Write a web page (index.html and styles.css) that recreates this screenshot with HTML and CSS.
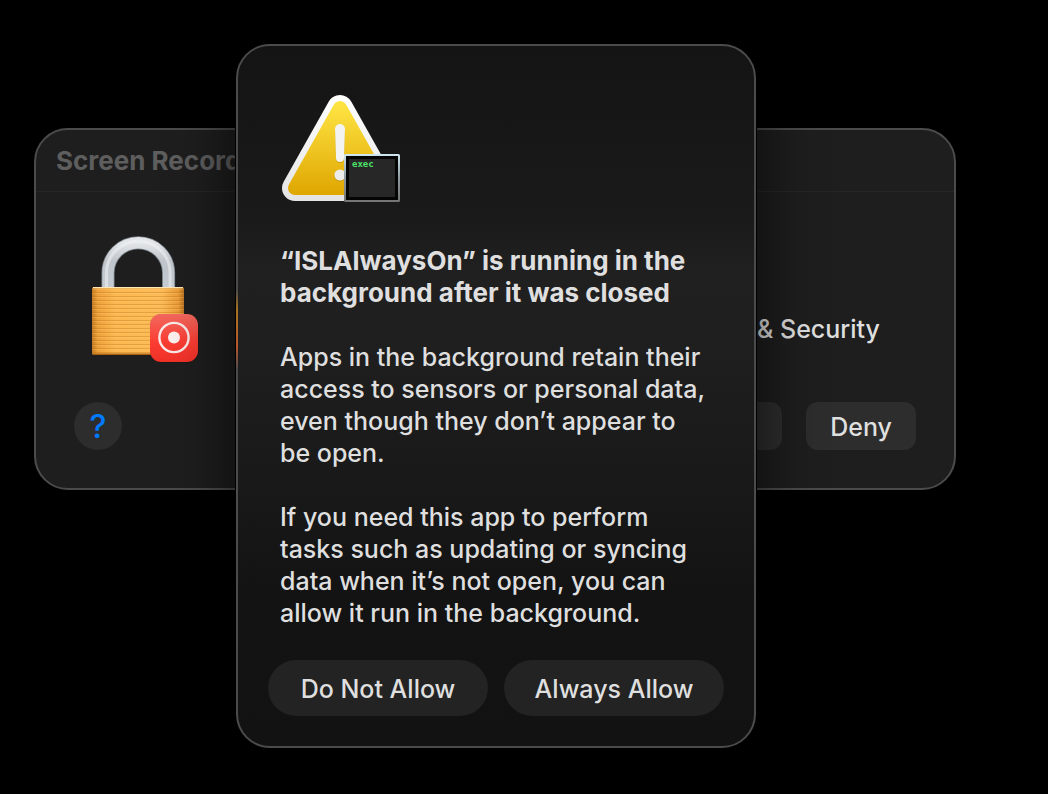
FILE: index.html
```html
<!DOCTYPE html>
<html lang="en">
<head>
    <meta charset="UTF-8">
    <meta name="viewport" content="width=device-width, initial-scale=1.0">
    <title>ISLAlwaysOn</title>
    <link rel="stylesheet" href="styles.css">
</head>
<body>
    <main class="desktop">
        <section class="window" aria-label="Screen Recording">
            <header class="titlebar">
                <h2>Screen Recording</h2>
            </header>
            <div class="window-body">
                <svg class="lock" width="128" height="144" viewBox="0 0 128 144" aria-hidden="true">
                    <defs>
                        <linearGradient id="steel" x1="0" y1="0" x2="0" y2="1">
                            <stop offset="0" stop-color="#e3e6e9"/>
                            <stop offset="0.4" stop-color="#c0c5cb"/>
                            <stop offset="1" stop-color="#c5ccd3"/>
                        </linearGradient>
                        <linearGradient id="brass" x1="0" y1="0" x2="1" y2="0">
                            <stop offset="0" stop-color="#c47a20"/>
                            <stop offset="0.06" stop-color="#eda03a"/>
                            <stop offset="0.25" stop-color="#fcb850"/>
                            <stop offset="0.75" stop-color="#fdbc58"/>
                            <stop offset="0.94" stop-color="#eb9c36"/>
                            <stop offset="1" stop-color="#b8701d"/>
                        </linearGradient>
                        <linearGradient id="record" x1="0" y1="0" x2="0" y2="1">
                            <stop offset="0" stop-color="#f2695f"/>
                            <stop offset="0.6" stop-color="#fb3c32"/>
                            <stop offset="1" stop-color="#ef3127"/>
                        </linearGradient>
                        <pattern id="ridges" width="8" height="4" patternUnits="userSpaceOnUse">
                            <rect y="3" width="8" height="1" fill="#ba6c10" opacity="0.35"/>
                            <rect y="0" width="8" height="1" fill="#ffd792" opacity="0.2"/>
                        </pattern>
                    </defs>
                    <path d="M28 64V48a30.3 30.3 0 0 1 60.6 0V64" fill="none" stroke="#7e868f" stroke-width="13"/>
                    <path d="M28 64V48a30.3 30.3 0 0 1 60.6 0V64" fill="none" stroke="url(#steel)" stroke-width="11.4"/>
                    <path d="M26.5 62V48a31.8 31.8 0 0 1 63.6 0V62" fill="none" stroke="#f0f2f4" stroke-width="3" opacity="0.55"/>
                    <rect x="12" y="62" width="92" height="68" rx="2" fill="url(#brass)"/>
                    <rect x="12" y="62" width="92" height="68" rx="2" fill="url(#ridges)"/>
                    <rect x="13" y="62" width="90" height="1.3" fill="#ffe6b4"/>
                    <rect x="13" y="128.5" width="90" height="1.5" fill="#a96111"/>
                    <rect x="70" y="89" width="48.5" height="48.5" rx="11.5" fill="#000" opacity="0.25"/>
                    <rect x="70" y="89" width="48" height="48" rx="11" fill="url(#record)"/>
                    <circle cx="94" cy="112.5" r="14.6" fill="none" stroke="#fbe9e8" stroke-width="2.4"/>
                    <circle cx="94" cy="112.5" r="6" fill="#fdf0ef"/>
                </svg>
                <p class="window-message">&amp; Security</p>
            </div>
            <footer class="window-footer">
                <button type="button" class="help" aria-label="Help">?</button>
                <button type="button" class="square settings" aria-label="Open System Settings"></button>
                <button type="button" class="square">Deny</button>
            </footer>
        </section>

        <section class="dialog" role="alertdialog" aria-labelledby="dialog-title">
            <div class="dialog-content">
                <svg class="warning" width="120" height="129" viewBox="0 0 120 129" aria-hidden="true">
                    <defs>
                        <linearGradient id="rim" x1="0" y1="0" x2="0" y2="128" gradientUnits="userSpaceOnUse">
                            <stop offset="0.1" stop-color="#ffffff"/>
                            <stop offset="0.9" stop-color="#e4e4e4"/>
                        </linearGradient>
                        <linearGradient id="yellow" x1="0" y1="17" x2="0" y2="111" gradientUnits="userSpaceOnUse">
                            <stop offset="0" stop-color="#ffe645"/>
                            <stop offset="1" stop-color="#dfa600"/>
                        </linearGradient>
                        <linearGradient id="frame" x1="0" y1="0" x2="0" y2="1">
                            <stop offset="0" stop-color="#cfe7f1"/>
                            <stop offset="0.5" stop-color="#8d9a9f"/>
                            <stop offset="1" stop-color="#737373"/>
                        </linearGradient>
                    </defs>
                    <path d="M60 24 105 104H15Z" fill="url(#rim)" stroke="url(#rim)" stroke-width="26" stroke-linejoin="round"/>
                    <path d="M60 24 105 104H15Z" fill="url(#yellow)" stroke="url(#yellow)" stroke-width="14" stroke-linejoin="round"/>
                    <path d="M55 46a5 5 0 0 1 10 0L64 75a4 4 0 0 1-8 0Z" fill="#a87b00" opacity="0.45"/>
                    <circle cx="60" cy="92" r="5.8" fill="#a87b00" opacity="0.45"/>
                    <path d="M55 45a5 5 0 0 1 10 0L64 74a4 4 0 0 1-8 0Z" fill="#f3f3f1"/>
                    <circle cx="60" cy="91" r="5.6" fill="#ececea"/>
                    <rect x="64" y="70" width="56" height="48" rx="1.5" fill="url(#frame)"/>
                    <rect x="66" y="72" width="52" height="44" fill="#050505"/>
                    <rect x="69" y="75" width="46" height="38" fill="#272727"/>
                    <text class="exec" x="72" y="83">exec</text>
                </svg>
                <h1 id="dialog-title">“ISLAlwaysOn” is running in the background after it was closed</h1>
                <p>Apps in the background retain their access to sensors or personal data, even though they don’t appear to be open.</p>
                <p>If you need this app to perform tasks such as updating or syncing data when it’s not open, you can allow it run in the background.</p>
            </div>
            <div class="dialog-actions">
                <button type="button">Do Not Allow</button>
                <button type="button">Always Allow</button>
            </div>
        </section>
    </main>
</body>
</html>
```
FILE: styles.css
```css
:root {
    --window: #1e1e1e;
    --border: #4b4b4b;
    --text: #dfdfdf;
    --button: #2d2d2d;
    --blue: #007aff;
}

* {
    margin: 0;
    padding: 0;
    box-sizing: border-box;
}

body {
    font-family: Inter, "Liberation Sans", sans-serif;
    font-size: 25px;
    font-weight: 500;
    line-height: 32px;
    background: #000;
    color: var(--text);
}

button {
    padding-top: 2px;
    font: inherit;
    color: inherit;
    border: none;
    cursor: pointer;
}

.desktop {
    position: relative;
    min-height: 100vh;
    overflow: hidden;
}

/* window behind */
.window {
    position: absolute;
    top: 128px;
    left: 34px;
    right: 92px;
    background: var(--window);
    border: 2px solid var(--border);
    border-radius: 34px;
}

.titlebar {
    padding: 15px 20px 14px;
    border-bottom: 1px solid #262626;
}

.titlebar h2 {
    font-size: 26px;
    font-weight: 700;
    color: #5e5e5e;
}

.window-body {
    display: flex;
    justify-content: space-between;
    align-items: flex-end;
    padding: 33px 74px 33px 44px;
}

.window-message {
    margin-bottom: 24px;
}

.window-footer {
    display: flex;
    gap: 24px;
    padding: 0 38px 38px;
}

.help {
    width: 48px;
    height: 48px;
    margin-right: auto;
    border-radius: 50%;
    background: var(--button);
    color: var(--blue);
    font-size: 32px;
}

.square {
    height: 48px;
    padding: 2px 24px 0;
    border-radius: 12px;
    background: var(--button);
}

.square.settings {
    width: 300px;
}

.lock,
.warning {
    display: block;
}

/* alert in front */
.dialog {
    position: absolute;
    top: 44px;
    left: 236px;
    width: 520px;
    padding: 38px 30px 30px;
    border: 2px solid var(--border);
    border-radius: 34px;
    background: linear-gradient(#141414, #1a1a1a 25%, #202020 32%, #1f1f1f 42%, #1b1b1b 55%, #191919 62%, #131313 78%, #121212);
    box-shadow: 0 0 0 1px #000, 0 0 64px rgba(0, 0, 0, 0.7);
}

/* lock colour caught in the glass edge */
.dialog::before {
    content: "";
    position: absolute;
    top: 244px;
    left: -2px;
    width: 2px;
    height: 80px;
    background: linear-gradient(transparent, #a87420 25%, #b8582c 70%, transparent);
}

.dialog-content {
    display: grid;
    gap: 32px;
    padding: 0 12px;
}

.dialog h1 {
    font-size: 26px;
    font-weight: 700;
}

.exec {
    font: bold 9px "DejaVu Sans Mono", monospace;
    fill: #4be368;
}

.dialog-actions {
    display: grid;
    grid-template-columns: 1fr 1fr;
    gap: 16px;
    margin-top: 31px;
}

.dialog-actions button {
    height: 56px;
    border-radius: 28px;
    background: #232323;
}
```
